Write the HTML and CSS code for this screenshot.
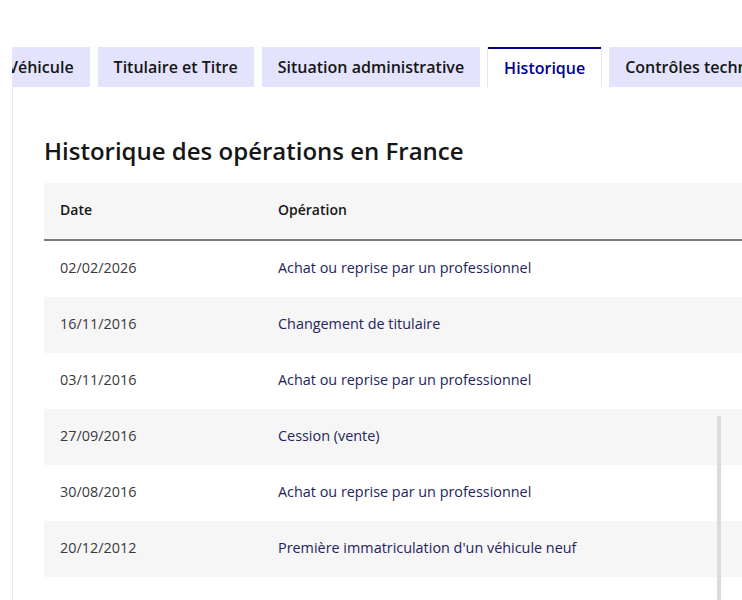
FILE: index.html
```html
<!DOCTYPE html>
<html lang="fr">
<head>
<meta charset="utf-8">
<title>Historique</title>
<link rel="stylesheet" href="styles.css">
</head>
<body>
<div class="page">
  <div class="tabs-wrap">
    <ul class="tabs">
      <li class="tab">Véhicule</li>
      <li class="tab">Titulaire et Titre</li>
      <li class="tab">Situation administrative</li>
      <li class="tab tab--selected">Historique</li>
      <li class="tab">Contrôles techniques</li>
    </ul>
  </div>
  <section class="panel">
    <h2 class="panel-title">Historique des opérations en France</h2>
    <table class="history">
      <thead>
        <tr><th class="col-date">Date</th><th>Opération</th></tr>
      </thead>
      <tbody>
        <tr><td class="date">02/02/2026</td><td class="op">Achat ou reprise par un professionnel</td></tr>
        <tr><td class="date">16/11/2016</td><td class="op">Changement de titulaire</td></tr>
        <tr><td class="date">03/11/2016</td><td class="op">Achat ou reprise par un professionnel</td></tr>
        <tr><td class="date">27/09/2016</td><td class="op">Cession (vente)</td></tr>
        <tr><td class="date">30/08/2016</td><td class="op">Achat ou reprise par un professionnel</td></tr>
        <tr><td class="date">20/12/2012</td><td class="op">Première immatriculation d'un véhicule neuf</td></tr>
      </tbody>
    </table>
  </section>
  <div class="scroll-thumb"></div>
</div>
</body>
</html>
```
FILE: styles.css
```css
html, body {
  margin: 0;
  padding: 0;
  background: #fff;
  overflow: hidden;
}

body {
  font-family: "Open Sans", "Noto Sans", sans-serif;
  color: #161616;
}

.page {
  position: relative;
  width: 742px;
  height: 600px;
  overflow: hidden;
}

/* tab strip, scrolled a little to the right */
.tabs-wrap {
  margin-left: 12px;
  padding-top: 47px;
  overflow: hidden;
}

.tabs {
  list-style: none;
  margin: 0 0 0 -20px;
  padding: 0;
  display: flex;
  gap: 8px;
  white-space: nowrap;
}

.tab {
  flex: none;
  height: 40px;
  padding: 0 16px;
  box-sizing: border-box;
  display: flex;
  align-items: center;
  background: #e3e3fd;
  color: #161616;
  font-weight: 600;
  font-size: 16px;
}

.tab--selected {
  background: #fff;
  color: #000091;
  border-top: 2px solid #000091;
  box-shadow: -1px 0 0 #e5e5e5, 1px 0 0 #e5e5e5;
}

.panel {
  margin-left: 12px;
  border-left: 1px solid #e5e5e5;
  padding: 48px 0 0 31px;
  height: 600px;
}

.panel-title {
  margin: 0 0 16px;
  font-size: 24px;
  line-height: 32px;
  font-weight: 600;
  color: #161616;
}

.history {
  border-collapse: collapse;
  width: 760px;
  font-size: 14.4px;
}

.history th {
  text-align: left;
  font-weight: 600;
  font-size: 14px;
  height: 53px;
  padding: 0 16px 3px;
  background: #f6f6f6;
  border-bottom: 2px solid #7a7a7a;
  color: #161616;
}

.history th.col-date {
  width: 186px;
}

.history td {
  height: 53px;
  padding: 0 16px 3px;
}

.history tbody tr:nth-child(even) td {
  background: #f6f6f6;
}

.history td.date {
  color: #3a3a3a;
}

.history td.op {
  color: #24245a;
}

.scroll-thumb {
  position: absolute;
  left: 717px;
  top: 416px;
  width: 4px;
  height: 184px;
  background: #dadada;
}
```
